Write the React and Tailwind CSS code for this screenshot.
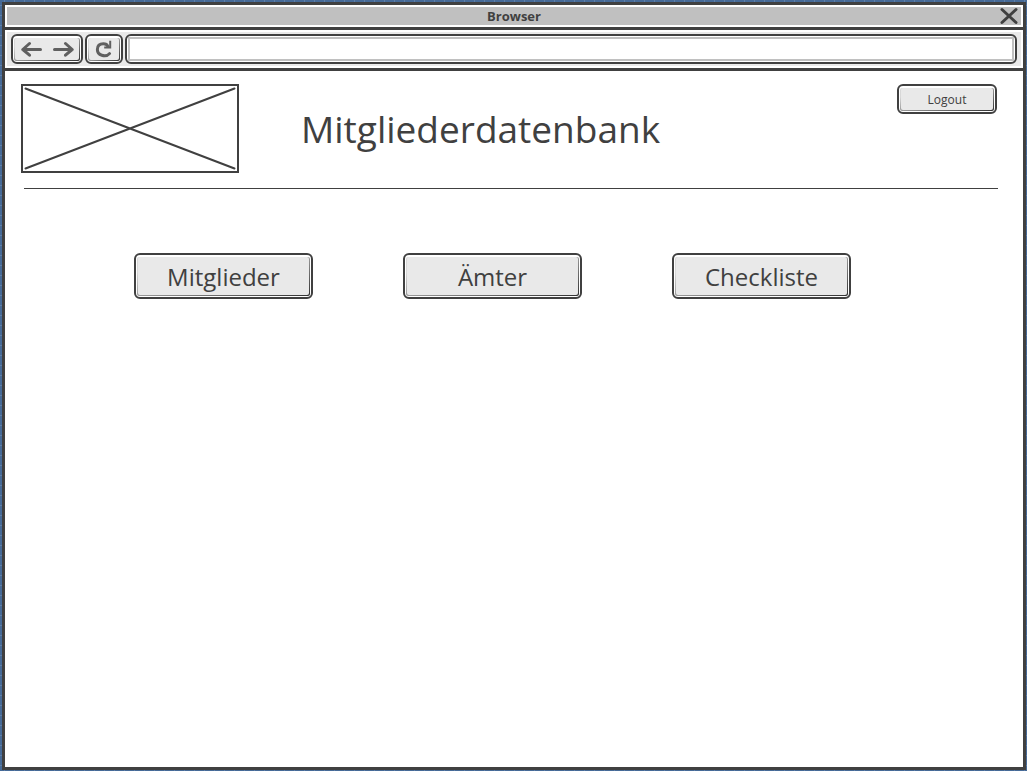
import React from "react";

function Face({ children, className = "" }) {
  return (
    <span className="flex h-full w-full rounded-xs bg-linear-to-br from-[#d8d8d8] from-20% via-[#999999] to-[#333333] p-px pt-0">
      <span className={`flex h-full w-full items-center justify-center rounded-xs bg-[#e9e9e9] ${className}`}>
        {children}
      </span>
    </span>
  );
}

function SketchButton({ children, className = "", faceClass = "", ...props }) {
  return (
    <button
      type="button"
      className={`shrink-0 cursor-pointer rounded-md border-2 border-[#404040] bg-white p-px pt-0.5 ${className}`}
      {...props}
    >
      <Face className={faceClass}>{children}</Face>
    </button>
  );
}

function ArrowLeft() {
  return (
    <svg width="21" height="16" viewBox="0 0 21 16" fill="none" stroke="#606060" strokeWidth="3" strokeLinecap="round" strokeLinejoin="round" aria-hidden="true">
      <path d="M1.8 8.5H19.5M8.5 2.5L1.8 8.5L8.5 14.2" />
    </svg>
  );
}

function ArrowRight() {
  return (
    <svg width="21" height="16" viewBox="0 0 21 16" fill="none" stroke="#606060" strokeWidth="3" strokeLinecap="round" strokeLinejoin="round" aria-hidden="true">
      <path d="M1.5 8.5H19.2M12.5 2.5L19.2 8.5L12.5 14.2" />
    </svg>
  );
}

function Reload() {
  return (
    <svg width="18" height="18" viewBox="0 0 18 18" fill="none" stroke="#606060" strokeWidth="3" strokeLinecap="round" aria-hidden="true">
      <path d="M14.5 13.6C12.8 15.6 9.8 16.2 6.8 15.3C3.6 14.3 2.3 12 2.4 9.3C2.5 5.8 4.8 3.7 8.3 3.7C10.8 3.7 12.3 4.8 12.8 6.2" />
      <path d="M15.2 0.8V7.4H9.2" strokeWidth="2" strokeLinecap="butt" />
    </svg>
  );
}

export default function App() {
  return (
    <div className="flex min-h-screen flex-col bg-[#466a97] bg-[linear-gradient(to_right,#5f7fa7_1px,transparent_1px),linear-gradient(to_bottom,#5f7fa7_1px,transparent_1px)] bg-size-[10px_10px] bg-position-[4px_5px] p-0.5 pr-px pb-px font-['Open_Sans',sans-serif] text-[#404040]">
      <div className="flex grow flex-col border-3 border-[#404040] bg-white">
        <div className="border-b-3 border-[#404040] p-0.5">
          <div className="flex h-[18px] items-center bg-[#c0c0c0] px-[3px]">
            <div className="flex-1" />
            <span className="text-[13px] leading-4 font-bold">Browser</span>
            <div className="flex flex-1 justify-end">
              <button type="button" aria-label="Close" className="cursor-pointer">
                <svg width="18" height="18" viewBox="0 0 18 18" fill="none" stroke="#404040" strokeWidth="3" strokeLinecap="round" aria-hidden="true">
                  <path d="M2 2.5L16 15.5M16 2.5L2 15.5" />
                </svg>
              </button>
            </div>
          </div>
        </div>

        <div className="border-b-3 border-[#404040] p-0.5">
          <div className="flex gap-0.5 bg-[#e9e9e9] px-1 py-0.5">
            <div className="h-[30px] w-[72px] shrink-0 rounded-md border-2 border-[#404040] bg-white p-px pt-0.5">
              <Face className="gap-[11px]">
                <button type="button" aria-label="Back" className="cursor-pointer">
                  <ArrowLeft />
                </button>
                <button type="button" aria-label="Forward" className="cursor-pointer">
                  <ArrowRight />
                </button>
              </Face>
            </div>
            <SketchButton aria-label="Reload" className="h-[30px] w-[38px]">
              <Reload />
            </SketchButton>
            <div className="flex h-[30px] grow rounded-md border-2 border-[#404040] bg-white p-px">
              <input type="text" aria-label="Address" className="w-full border-2 border-[#c0c0c0] bg-white px-1 text-sm outline-none" />
            </div>
          </div>
        </div>

        <header className="flex items-start pt-[13px] pr-[26px] pl-4">
          <svg width="218" height="89" viewBox="0 0 218 89" fill="none" stroke="#404040" strokeWidth="2" className="shrink-0" role="img" aria-label="Logo">
            <rect x="1" y="1" width="216" height="87" />
            <path d="M4.5 4.5L213.5 84.5M213.5 4.5L4.5 84.5" strokeLinecap="round" />
          </svg>
          <h1 className="ml-[62px] grow pt-5 text-[37px] leading-[50px]">Mitgliederdatenbank</h1>
          <SketchButton className="h-[30px] w-[100px]" faceClass="pt-0.5 text-xs">
            Logout
          </SketchButton>
        </header>

        <hr className="mt-[15px] mr-[25px] ml-[19px] border-t border-[#404040]" />

        <nav className="mt-16 flex flex-wrap gap-[90px] pl-[129px]">
          <SketchButton className="h-[46px] w-[179px]" faceClass="pt-0.5 text-2xl">Mitglieder</SketchButton>
          <SketchButton className="h-[46px] w-[179px]" faceClass="pt-0.5 text-2xl">Ämter</SketchButton>
          <SketchButton className="h-[46px] w-[179px]" faceClass="pt-0.5 text-2xl">Checkliste</SketchButton>
        </nav>
      </div>
    </div>
  );
}
